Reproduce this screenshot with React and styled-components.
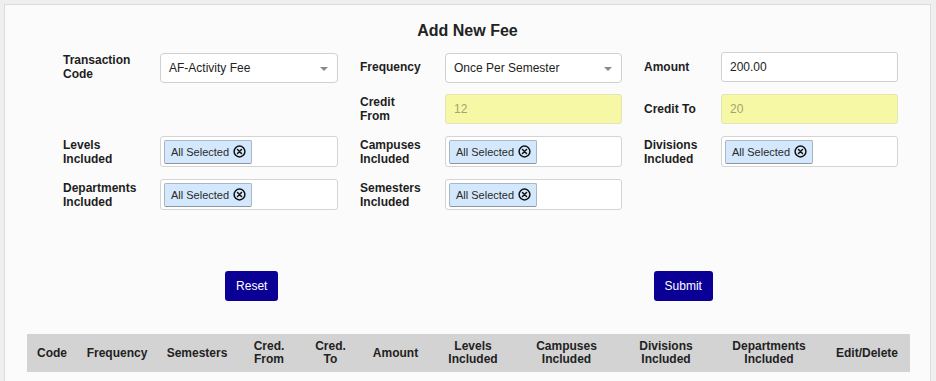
import React from 'react';
import styled, { createGlobalStyle } from 'styled-components';

const GlobalStyle = createGlobalStyle`
  body {
    margin: 0;
    background: #efefef;
    font-family: "Liberation Sans", Arial, sans-serif;
  }
`;

const Panel = styled.div`
  margin: 4px 5px 0 4px;
  border: 1px solid #dcdcdc;
  border-bottom: none;
  background: #fbfbfb;
  padding: 16px 0 20px;
  min-height: 360px;
  box-sizing: border-box;
`;

const Title = styled.h2`
  margin: 0 0 11px;
  text-align: center;
  font-size: 16px;
  line-height: 19px;
  font-weight: bold;
  color: #222;
`;

const FormGrid = styled.div`
  display: grid;
  grid-template-columns: 75px 178px 63px 177px 55px 177px;
  column-gap: 22px;
  row-gap: 12px;
  align-items: center;
  padding-left: 58px;
`;

const Label = styled.div`
  font-size: 12px;
  line-height: 14px;
  font-weight: bold;
  color: #1e1e1e;
`;

const Empty = styled.div``;

const SelectBox = styled.div`
  position: relative;
  height: 30px;
  margin: ${(p) => (p.$shift ? '2px 0 -1px' : '0')};
  box-sizing: border-box;
  border: 1px solid #d0d0d0;
  border-radius: 4px;
  background: #fff;
  padding: 0 8px;
  display: flex;
  align-items: center;
  font-size: 12px;
  color: #222;

  &::after {
    content: '';
    position: absolute;
    right: 9px;
    top: 13px;
    border-left: 4px solid transparent;
    border-right: 4px solid transparent;
    border-top: 4px solid #8a8a8a;
  }
`;

const TextInput = styled.div`
  height: 30px;
  box-sizing: border-box;
  border: 1px solid ${(p) => (p.$readonly ? '#e2e4b6' : '#d0d0d0')};
  border-radius: 3px;
  background: ${(p) => (p.$readonly ? '#f6f8a6' : '#fff')};
  padding: 0 8px;
  display: flex;
  align-items: center;
  font-size: 12px;
  color: ${(p) => (p.$readonly ? '#a3a46e' : '#222')};
`;

const MultiBox = styled.div`
  height: 31px;
  box-sizing: border-box;
  border: 1px solid #d4d4d4;
  border-radius: 3px;
  background: #fff;
  padding: 2px 3px;
  display: flex;
  align-items: center;
`;

const Chip = styled.span`
  display: inline-flex;
  align-items: center;
  gap: 4px;
  height: 24px;
  box-sizing: border-box;
  padding: 0 5px 0 6px;
  background: #d3e8fc;
  border: 1px solid #a9b6c4;
  border-bottom-color: #8d959e;
  border-radius: 2px;
  font-size: 11px;
  color: #2a2a2a;
`;

const ButtonRow = styled.div`
  display: grid;
  grid-template-columns: 1fr 1fr;
  justify-items: center;
  margin: 61px 31px 0 31px;
`;

const Button = styled.button`
  height: 30px;
  padding: 0 11px;
  border: none;
  border-radius: 3px;
  background: #0b0096;
  color: #fff;
  font-family: "Liberation Sans", Arial, sans-serif;
  font-size: 12px;
`;

const Table = styled.table`
  margin: 33px 0 0 22px;
  width: 883px;
  border-collapse: collapse;
  table-layout: fixed;
`;

const Th = styled.th`
  background: #d3d3d3;
  height: 38px;
  padding: 0;
  font-size: 12px;
  line-height: 13px;
  font-weight: bold;
  color: #222;
  text-align: center;
  vertical-align: middle;
`;

const ClearIcon = () => (
  <svg width="13" height="13" viewBox="0 0 13 13">
    <circle cx="6.5" cy="6.5" r="5.4" fill="none" stroke="#111" strokeWidth="1.5" />
    <path d="M4.5 4.5 L8.5 8.5 M8.5 4.5 L4.5 8.5" stroke="#111" strokeWidth="1.5" strokeLinecap="round" />
  </svg>
);

const Multi = () => (
  <MultiBox>
    <Chip>
      All Selected
      <ClearIcon />
    </Chip>
  </MultiBox>
);

const columns = [
  ['Code', 50],
  ['Frequency', 80],
  ['Semesters', 80],
  ['Cred.\nFrom', 64],
  ['Cred.\nTo', 59],
  ['Amount', 71],
  ['Levels\nIncluded', 84],
  ['Campuses\nIncluded', 103],
  ['Divisions\nIncluded', 96],
  ['Departments\nIncluded', 110],
  ['Edit/Delete', 86],
];

export default function App() {
  return (
    <>
      <GlobalStyle />
      <Panel>
        <Title>Add New Fee</Title>
        <FormGrid>
          <Label>Transaction<br />Code</Label>
          <SelectBox $shift>AF-Activity Fee</SelectBox>
          <Label>Frequency</Label>
          <SelectBox $shift>Once Per Semester</SelectBox>
          <Label>Amount</Label>
          <TextInput>200.00</TextInput>

          <Empty />
          <Empty />
          <Label>Credit<br />From</Label>
          <TextInput $readonly>12</TextInput>
          <Label>Credit To</Label>
          <TextInput $readonly>20</TextInput>

          <Label>Levels<br />Included</Label>
          <Multi />
          <Label>Campuses<br />Included</Label>
          <Multi />
          <Label>Divisions<br />Included</Label>
          <Multi />

          <Label>Departments<br />Included</Label>
          <Multi />
          <Label>Semesters<br />Included</Label>
          <Multi />
        </FormGrid>

        <ButtonRow>
          <Button>Reset</Button>
          <Button>Submit</Button>
        </ButtonRow>

        <Table>
          <colgroup>
            {columns.map(([name, w]) => (
              <col key={name} style={{ width: w }} />
            ))}
          </colgroup>
          <thead>
            <tr>
              {columns.map(([name]) => (
                <Th key={name}>
                  {name.split('\n').map((line, i) => (
                    <React.Fragment key={i}>
                      {i > 0 && <br />}
                      {line}
                    </React.Fragment>
                  ))}
                </Th>
              ))}
            </tr>
          </thead>
        </Table>
      </Panel>
    </>
  );
}
